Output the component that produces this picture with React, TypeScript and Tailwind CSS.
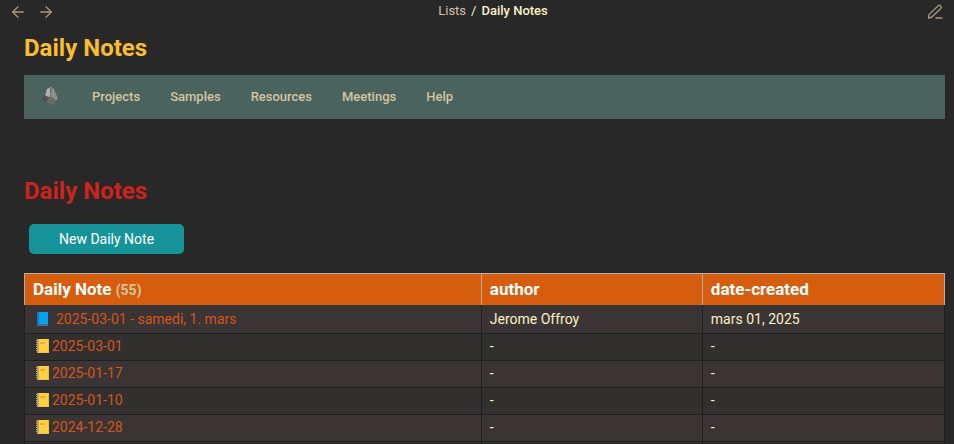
import React from "react";
import { ArrowLeft, ArrowRight } from "lucide-react";

const links = ["Projects", "Samples", "Resources", "Meetings", "Help"];

type Note = { title: string; author: string; created: string; pinned?: boolean };

const notes: Note[] = [
  { title: "2025-03-01 - samedi, 1. mars", author: "Jerome Offroy", created: "mars 01, 2025", pinned: true },
  { title: "2025-03-01", author: "-", created: "-" },
  { title: "2025-01-17", author: "-", created: "-" },
  { title: "2025-01-10", author: "-", created: "-" },
  { title: "2024-12-28", author: "-", created: "-" },
];

function PenIcon() {
  return (
    <svg width="18" height="18" viewBox="0 0 24 24" fill="none" stroke="currentColor" strokeWidth="1.75" strokeLinecap="round" strokeLinejoin="round" aria-hidden="true">
      <path d="M12 20h8" />
      <path d="M15 3.8a2.4 2.4 0 0 1 3.4 3.4L6 19l-4 1 .5-4.5Z" />
    </svg>
  );
}

function StoneLogo() {
  return (
    <svg width="18" height="20" viewBox="0 0 18 20" aria-hidden="true">
      <path d="M3 10 5 3 9 1 8 6 8 11Z" fill="#b0b0b0" />
      <path d="M9 1 12 3 14 8 16 13 13 15 9 11 8 6Z" fill="#8f8f8f" />
      <path d="M0 12 3 9 6 12 5 17 1 14Z" fill="#505050" />
      <path d="M6 12 9 11 13 13 13 18 9 19 5 17Z" fill="#6c6969" />
      <path d="M9 2 8.5 7" stroke="#606060" strokeWidth="1" />
    </svg>
  );
}

function BlueBook() {
  return (
    <svg className="shrink-0" width="13" height="15" viewBox="0 0 13 15" aria-hidden="true">
      <path d="M1 0h11v12H3v2H1Z" fill="#03a4f0" />
      <path d="M1 0h2v14H1Z" fill="#1976b5" />
      <path d="M2 12h10v2H2Z" fill="#3b6f9b" />
    </svg>
  );
}

function Notebook() {
  return (
    <svg className="shrink-0" width="13" height="15" viewBox="0 0 13 15" aria-hidden="true">
      <path d="M1 0h12v14H1Z" fill="#ffd23b" />
      <path d="M1 0h2v14H1Z" fill="#c5a34b" />
      <path d="M2 13h11v1H2Z" fill="#e4c27a" />
      <path d="M12 0h1v13h-1Z" fill="#eabd50" />
      <path d="M0 1.5h3M0 3.5h3M0 5.5h3M0 7.5h3M0 9.5h3M0 11.5h3" stroke="#a9a294" strokeWidth="1" />
      <path d="M4 3h5v2H4Z" fill="#ffa62b" />
    </svg>
  );
}

export default function App() {
  return (
    <div className="h-screen overflow-hidden bg-[#282828] font-['Roboto','Liberation_Sans',sans-serif] text-[#fbf1c7]">
      <header className="grid h-6 grid-cols-[1fr_auto_1fr] items-center px-[9px] text-[#a89984]">
        <div className="flex gap-[10px]">
          <button type="button" aria-label="Back"><ArrowLeft size={18} strokeWidth={1.75} /></button>
          <button type="button" aria-label="Forward"><ArrowRight size={18} strokeWidth={1.75} /></button>
        </div>
        <nav aria-label="Breadcrumb" className="flex gap-[5px] pb-[2px] pl-8 text-[13px] leading-5">
          <a href="#lists" className="text-[#d5c4a1]">Lists</a>
          <span className="text-[#fbf1c7]">/</span>
          <span className="font-medium text-[#fbf1c7]">Daily Notes</span>
        </nav>
        <button type="button" aria-label="Edit" className="justify-self-end"><PenIcon /></button>
      </header>

      <main className="pr-[9px] pl-6">
        <h1 className="pt-2 text-[24px] leading-8 font-bold text-[#fabd2f]">Daily Notes</h1>

        <nav aria-label="Main" className="mt-[11px] flex h-11 items-center gap-[30px] bg-[#4b635e] pl-[18px] text-[13px] leading-5 font-medium text-[#d5c4a1]">
          <a href="#home" aria-label="Home" className="w-5 pb-[2px]"><StoneLogo /></a>
          {links.map((label) => (
            <a key={label} href={"#" + label.toLowerCase()}>{label}</a>
          ))}
        </nav>

        <h2 className="mt-14 text-[24px] leading-8 font-bold text-[#cc241d]">Daily Notes</h2>

        <button type="button" className="mt-[17px] ml-[5px] block h-[30px] rounded-[5px] bg-[#17939a] px-[30px] text-[14px] leading-5 text-white">
          New Daily Note
        </button>

        <table className="mt-[19px] w-full table-fixed border-separate border-spacing-0 text-left">
          <thead>
            <tr className="h-8 bg-[#d65d0e] align-baseline text-[17px] leading-6 text-white">
              <th className="w-[49.6%] border-t border-l border-[#b0b0ac] px-2 pt-[3px] pb-0 font-bold">
                Daily Note <span className="text-[14px] text-[#d5c4a1]">(55)</span>
              </th>
              <th className="w-[24%] border-t border-l border-[#b0b0ac] px-2 pt-[3px] pb-0 font-bold">author</th>
              <th className="w-[26.4%] border-x border-t border-[#b0b0ac] px-2 pt-[3px] pb-0 font-bold">date-created</th>
            </tr>
          </thead>
          <tbody className="text-[14px] leading-5">
            {notes.map((note, i) => (
              <tr key={i} className="h-[27px] first:h-[29px] odd:bg-[#3a3534] even:bg-[#32302f] [&>td]:pb-[2px] first:[&>td]:pb-0">
                <td className="border-b border-l border-[#1d2021] px-2 pt-0">
                  <a href={"#note-" + i} className={note.pinned ? "flex items-center gap-[7px] pl-[3px] text-[#d6551f]" : "flex items-center gap-[3px] pl-[3px] text-[#d6551f]"}>
                    {note.pinned ? <BlueBook /> : <Notebook />}
                    {note.title}
                  </a>
                </td>
                <td className="border-b border-l border-[#1d2021] px-2 pt-0">{note.author}</td>
                <td className="border-x border-b border-[#1d2021] px-2 pt-0">{note.created}</td>
              </tr>
            ))}
            <tr className="h-[27px] bg-[#32302f]">
              <td className="border-b border-l border-[#1d2021]" />
              <td className="border-b border-l border-[#1d2021]" />
              <td className="border-x border-b border-[#1d2021]" />
            </tr>
          </tbody>
        </table>
      </main>
    </div>
  );
}
